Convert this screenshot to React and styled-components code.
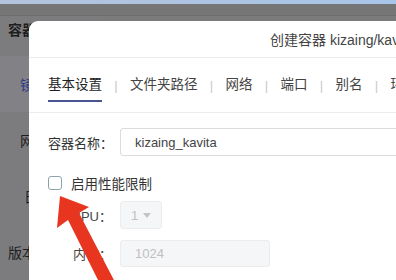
import styled, { createGlobalStyle } from "styled-components";

const Global = createGlobalStyle`
  html, body { margin: 0; padding: 0; }
  body {
    font-family: "Liberation Sans", "Noto Sans CJK SC", sans-serif;
    background: #808080;
  }
`;

const Screen = styled.div`
  position: relative;
  width: 396px;
  height: 280px;
  overflow: hidden;
  display: flex;
  flex-direction: column;
  background: #7e7e80;
`;

const BrowserStrip = styled.div`
  height: 5px;
  background: linear-gradient(90deg, #b4c4dc, #a8c4e8);
`;

const TopBar = styled.div`
  height: 16px;
  background: #767676;
  border-bottom: 1px solid #6e6e6e;
`;

const Body = styled.div`
  flex: 1;
  display: flex;
`;

const Sidebar = styled.div`
  width: 105px;
  display: flex;
  flex-direction: column;
  background: #7c7c7e;
`;

const SideItem = styled.div`
  height: ${(p) => p.h}px;
  margin-bottom: ${(p) => p.after || 0}px;
  flex-shrink: 0;
  display: flex;
  align-items: center;
  padding-left: ${(p) => p.indent}px;
  font-size: 14px;
  color: ${(p) => (p.active ? "#2e3a86" : "#1e1e1e")};
  background: ${(p) => (p.active ? "#828286" : "transparent")};
  font-weight: ${(p) => (p.bold ? 600 : 400)};
`;

const Content = styled.div`
  flex: 1;
  background: #7b7b7b;
`;

const Modal = styled.div`
  position: absolute;
  left: 29px;
  top: 21px;
  width: 640px;
  height: 300px;
  background: #fff;
  border-radius: 9px 0 0 0;
  display: flex;
  flex-direction: column;
  color: #333;
`;

const ModalHeader = styled.div`
  height: 36px;
  display: flex;
  align-items: center;
  padding-left: 241px;
  font-size: 14px;
  color: #444;
  border-bottom: 1px solid #ececec;
  white-space: nowrap;
`;

const Tabs = styled.div`
  height: 54px;
  display: flex;
  align-items: center;
  padding-left: 19px;
  border-bottom: 1px solid #ececec;
  white-space: nowrap;
`;

const Tab = styled.div`
  position: relative;
  font-size: 13.5px;
  color: ${(p) => (p.active ? "#222" : "#444")};
  line-height: 20px;
  &::after {
    content: "";
    display: ${(p) => (p.active ? "block" : "none")};
    position: absolute;
    left: 0;
    right: 0;
    bottom: -7px;
    height: 2px;
    background: #48558f;
  }
`;

const Sep = styled.span`
  margin: 0 12.3px;
  color: #c8c8c8;
  font-size: 13px;
`;

const Form = styled.div`
  padding: 14px 0 0 19px;
  display: flex;
  flex-direction: column;
`;

const Row = styled.div`
  display: grid;
  grid-template-columns: 64px auto auto;
  column-gap: 8px;
  align-items: center;
  height: ${(p) => p.h}px;
`;

const Label = styled.div`
  font-size: 13px;
  color: ${(p) => (p.dim ? "#444" : "#333")};
  text-align: right;
  white-space: nowrap;
`;

const Input = styled.div`
  height: ${(p) => p.h}px;
  width: ${(p) => p.w}px;
  box-sizing: border-box;
  border: 1px solid ${(p) => (p.disabled ? "#ececee" : "#dcdcdc")};
  background: ${(p) => (p.disabled ? "#f5f6f8" : "#fff")};
  border-radius: 3px;
  display: flex;
  align-items: center;
  justify-content: space-between;
  padding: 0 10px 0 ${(p) => (p.narrow ? 10 : 14)}px;
  font-size: 13px;
  color: ${(p) => (p.disabled ? "#c0c0c0" : "#444")};
`;

const Caret = styled.span`
  width: 0;
  height: 0;
  border-left: 4px solid transparent;
  border-right: 4px solid transparent;
  border-top: 5px solid #c4c4c4;
`;

const Hint = styled.span`
  font-size: 13px;
  color: #a8a8a8;
  padding-left: 2px;
  white-space: nowrap;
`;

const CheckRow = styled.div`
  height: 36px;
  margin-top: 8px;
  display: flex;
  align-items: center;
  gap: 9px;
  font-size: 13.5px;
  color: #333;
`;

const Checkbox = styled.span`
  width: 14px;
  height: 14px;
  box-sizing: border-box;
  border: 1.5px solid #8ea2aa;
  border-radius: 3px;
  background: #fff;
`;

const ArrowSvg = styled.svg`
  position: absolute;
  left: 0;
  top: 0;
  pointer-events: none;
`;

export default function App() {
  return (
    <Screen>
      <Global />
      <BrowserStrip />
      <TopBar />
      <Body>
        <Sidebar>
          <SideItem h={26} after={14} indent={8} bold>容器管理</SideItem>
          <SideItem h={56} indent={20} active>镜像</SideItem>
          <SideItem h={56} indent={20}>网络</SideItem>
          <SideItem h={56} indent={24}>日志</SideItem>
          <SideItem h={56} indent={8}>版本</SideItem>
        </Sidebar>
        <Content />
      </Body>

      <Modal>
        <ModalHeader>创建容器 kizaing/kavita</ModalHeader>
        <Tabs>
          <Tab active>基本设置</Tab>
          <Sep>|</Sep>
          <Tab>文件夹路径</Tab>
          <Sep>|</Sep>
          <Tab>网络</Tab>
          <Sep>|</Sep>
          <Tab>端口</Tab>
          <Sep>|</Sep>
          <Tab>别名</Tab>
          <Sep>|</Sep>
          <Tab>环境</Tab>
        </Tabs>
        <Form>
          <Row h={30}>
            <Label>容器名称：</Label>
            <Input h={28} w={300}>kizaing_kavita</Input>
          </Row>
          <CheckRow>
            <Checkbox />
            启用性能限制
          </CheckRow>
          <Row h={28}>
            <Label dim>CPU：</Label>
            <Input h={28} w={42} narrow disabled>
              1<Caret />
            </Input>
          </Row>
          <Row h={48}>
            <Label dim>内存：</Label>
            <Input h={27} w={150} disabled>1024</Input>
            <Hint>MB (0 ~ 4096MB)</Hint>
          </Row>
        </Form>
      </Modal>

      <ArrowSvg width="396" height="280" viewBox="0 0 396 280">
        <polygon
          points="60,196 57,228 68,220 100,284 116,284 79,213 89,207"
          fill="#e8351f"
        />
      </ArrowSvg>
    </Screen>
  );
}
